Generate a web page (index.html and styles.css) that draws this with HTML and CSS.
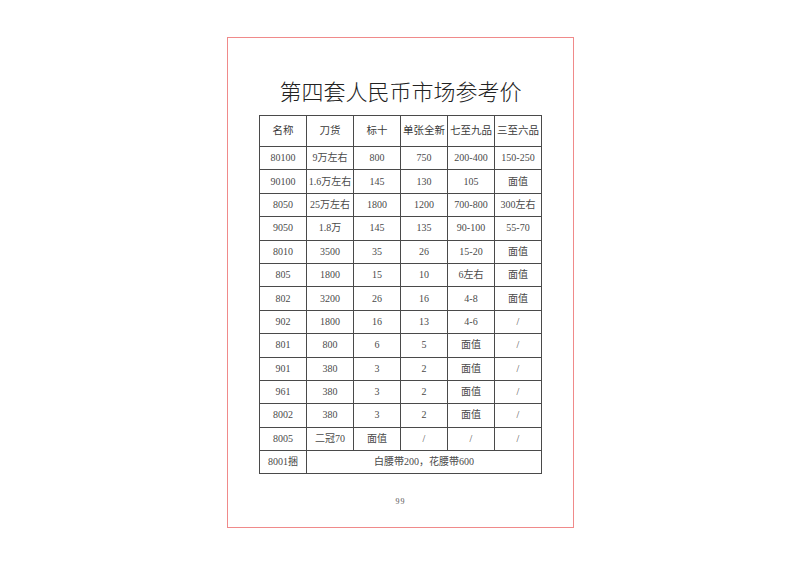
FILE: index.html
```html
<!DOCTYPE html>
<html lang="zh">
<head>
<meta charset="utf-8">
<title>第四套人民币市场参考价</title>
<link rel="stylesheet" href="styles.css">
</head>
<body>
<div class="page">
  <h1 class="title">第四套人民币市场参考价</h1>
  <table class="prices">
    <thead>
      <tr class="head"><td>名称</td><td>刀货</td><td>标十</td><td>单张全新</td><td>七至九品</td><td>三至六品</td></tr>
    </thead>
    <tbody>
      <tr><td>80100</td><td>9万左右</td><td>800</td><td>750</td><td>200-400</td><td>150-250</td></tr>
      <tr><td>90100</td><td>1.6万左右</td><td>145</td><td>130</td><td>105</td><td>面值</td></tr>
      <tr><td>8050</td><td>25万左右</td><td>1800</td><td>1200</td><td>700-800</td><td>300左右</td></tr>
      <tr><td>9050</td><td>1.8万</td><td>145</td><td>135</td><td>90-100</td><td>55-70</td></tr>
      <tr><td>8010</td><td>3500</td><td>35</td><td>26</td><td>15-20</td><td>面值</td></tr>
      <tr><td>805</td><td>1800</td><td>15</td><td>10</td><td>6左右</td><td>面值</td></tr>
      <tr><td>802</td><td>3200</td><td>26</td><td>16</td><td>4-8</td><td>面值</td></tr>
      <tr><td>902</td><td>1800</td><td>16</td><td>13</td><td>4-6</td><td>/</td></tr>
      <tr><td>801</td><td>800</td><td>6</td><td>5</td><td>面值</td><td>/</td></tr>
      <tr><td>901</td><td>380</td><td>3</td><td>2</td><td>面值</td><td>/</td></tr>
      <tr><td>961</td><td>380</td><td>3</td><td>2</td><td>面值</td><td>/</td></tr>
      <tr><td>8002</td><td>380</td><td>3</td><td>2</td><td>面值</td><td>/</td></tr>
      <tr><td>8005</td><td>二冠70</td><td>面值</td><td>/</td><td>/</td><td>/</td></tr>
      <tr><td>8001捆</td><td colspan="5">白腰带200，花腰带600</td></tr>
    </tbody>
  </table>
  <div class="folio">99</div>
</div>
</body>
</html>
```
FILE: styles.css
```css
html, body {
  margin: 0;
  padding: 0;
  background: #ffffff;
}
body {
  width: 800px;
  height: 566px;
  overflow: hidden;
  font-family: "Liberation Serif", "Noto Sans CJK SC", serif;
  color: #333333;
}
.page {
  box-sizing: border-box;
  margin: 37px 0 0 227px;
  width: 347px;
  height: 491px;
  border: 1.5px solid #f08a8a;
  display: flex;
  flex-direction: column;
  align-items: center;
}
.title {
  margin: 36.5px 0 0 0;
  height: 40px;
  font-family: "Noto Sans CJK SC", sans-serif;
  font-weight: 300;
  font-size: 22px;
  line-height: 30px;
  color: #222222;
}
.prices {
  border-collapse: collapse;
  table-layout: fixed;
  width: 283px;
  border: 1.5px solid #3a3a3a;
}
.prices td {
  padding: 0;
  border: 1px solid #4a4a4a;
  text-align: center;
  vertical-align: middle;
  font-size: 10px;
  height: 22.4px;
  line-height: 12px;
  white-space: nowrap;
  overflow: hidden;
  color: #4a4a4a;
}
.prices .head td {
  height: 30.5px;
  font-size: 10.5px;
  color: #3a3a3a;
}
.folio {
  margin-top: 23px;
  font-size: 8px;
  color: #555555;
  letter-spacing: 1px;
}
```
